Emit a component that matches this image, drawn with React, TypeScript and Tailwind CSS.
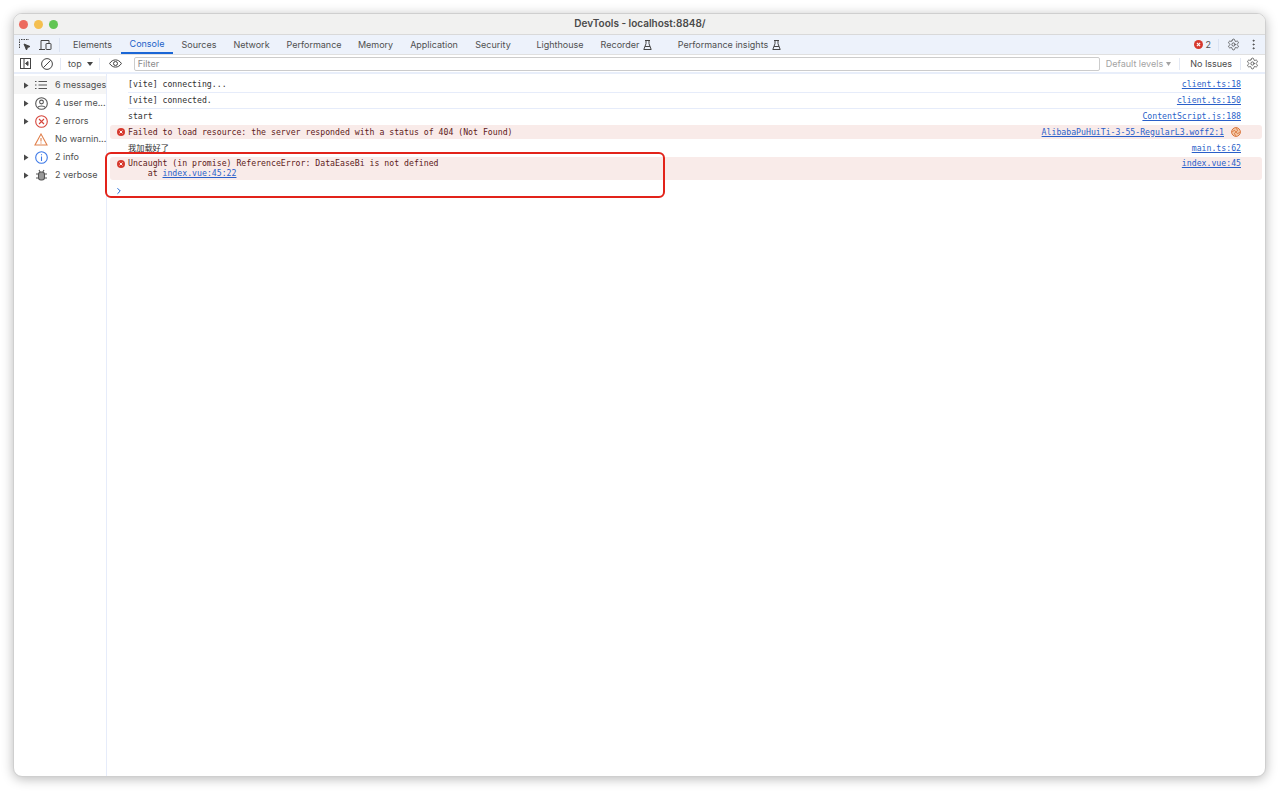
import { ChevronRight, EllipsisVertical, Settings } from "lucide-react";

const tabs = [
  { name: "Elements", w: "w-[57px]" },
  { name: "Console", w: "w-[52px]", active: true },
  { name: "Sources", w: "w-[52px]" },
  { name: "Network", w: "w-[53px]" },
  { name: "Performance", w: "w-[72px]" },
  { name: "Memory", w: "w-[51px]" },
  { name: "Application", w: "w-[66px]" },
  { name: "Security", w: "w-[52px]" },
  { name: "Lighthouse", w: "w-[82px]" },
  { name: "Recorder", w: "w-[51px]", flask: true },
  { name: "Performance insights", w: "w-[155px]", flask: true },
];

function Flask() {
  return (
    <svg width="9" height="10" viewBox="0 0 9 10" fill="none" stroke="#444" strokeWidth="1" className="shrink-0">
      <path d="M2 .5h5M3 .5v3.200L.8 9.500h7.400L6 3.700V.5M2 6.500h5" />
    </svg>
  );
}

function Caret() {
  return (
    <svg width="6" height="7" viewBox="0 0 6 7" className="shrink-0">
      <path d="M1 .5 5.500 3.500 1 6.500z" fill="#4a4a4a" />
    </svg>
  );
}

function ErrorDot({ size = 9 }: { size?: number }) {
  return (
    <svg width={size} height={size} viewBox="0 0 10 10" className="shrink-0">
      <circle cx="5" cy="5" r="5" fill="#d6392e" />
      <path d="M3.200 3.200 6.800 6.800M6.800 3.200 3.200 6.800" stroke="#fff" strokeWidth="1.200" />
    </svg>
  );
}

function SidebarIcon({ kind }: { kind: string }) {
  if (kind === "list")
    return (
      <svg width="12" height="12" viewBox="0 0 12 12" fill="none" stroke="#555" strokeWidth="1.200">
        <path d="M0 2.500h1.500M3.500 2.500H12M0 6h1.500M3.500 6H12M0 9.500h1.500M3.500 9.500H12" />
      </svg>
    );
  if (kind === "user")
    return (
      <svg width="13" height="13" viewBox="0 0 13 13" fill="none" stroke="#555" strokeWidth="1.100">
        <circle cx="6.500" cy="6.500" r="5.800" />
        <circle cx="6.500" cy="5" r="1.900" />
        <path d="M3 10.200c.6-1.600 6.400-1.600 7 0" />
      </svg>
    );
  if (kind === "error")
    return (
      <svg width="13" height="13" viewBox="0 0 13 13" fill="none" stroke="#d6453b" strokeWidth="1.100">
        <circle cx="6.500" cy="6.500" r="5.800" />
        <path d="M4 4l5 5M9 4l-5 5" />
      </svg>
    );
  if (kind === "warn")
    return (
      <svg width="14" height="13" viewBox="0 0 14 13" fill="none" stroke="#e0814d" strokeWidth="1.100">
        <path d="M7 1 13 12H1z" />
        <path d="M7 5v3.500M7 9.500v1" />
      </svg>
    );
  if (kind === "info")
    return (
      <svg width="13" height="13" viewBox="0 0 13 13" fill="none" stroke="#3b78e7" strokeWidth="1.100">
        <circle cx="6.500" cy="6.500" r="5.800" />
        <path d="M6.500 5.500V10M6.500 3.200v1.100" />
      </svg>
    );
  return (
    <svg width="11" height="12" viewBox="0 0 11 12" fill="none" stroke="#555" strokeWidth="1.100">
      <rect x="2.500" y="3" width="6" height="8" rx="2.500" fill="#999" />
      <path d="M3 1l1.200 2M8 1 6.800 3M0 5h2.500M8.500 5H11M0 9h2.500M8.500 9H11" />
    </svg>
  );
}

const sidebar = [
  { icon: "list", label: "6 messages", caret: true, active: true },
  { icon: "user", label: "4 user me...", caret: true },
  { icon: "error", label: "2 errors", caret: true },
  { icon: "warn", label: "No warnin..." },
  { icon: "info", label: "2 info", caret: true },
  { icon: "bug", label: "2 verbose", caret: true },
];

function Source({ children }: { children: string }) {
  return <span className="text-[#2a5fc9] underline whitespace-nowrap">{children}</span>;
}

function LogRow({ text, source, border, last }: { text: string; source: string; border?: boolean; last?: boolean }) {
  return (
    <div className={`flex justify-between items-center h-[16px] ml-[21px] mr-[24px] ${last ? "pb-px" : ""} ${border ? "border-b border-[#e6ecfa]" : ""}`}>
      <span>{text}</span>
      <Source>{source}</Source>
    </div>
  );
}

export default function App() {
  return (
    <div className="h-[791px] bg-white pt-[13px] pl-[13px]">
      <div className="relative flex flex-col w-[1253px] h-[764px] rounded-[9px] overflow-hidden bg-white border border-[#cfcfcf] shadow-[0_2px_12px_rgba(0,0,0,0.28)] font-['Inter',sans-serif] text-[#4f4f4f]">
        <div className="flex items-center h-[21px] bg-[#f1f1f0] border-b border-[#d9d9d9] relative shrink-0">
          <div className="flex gap-[6px] pl-[5px]">
            <span className="w-[9px] h-[9px] rounded-full bg-[#ec6a5e]" />
            <span className="w-[9px] h-[9px] rounded-full bg-[#f4bf4f]" />
            <span className="w-[9px] h-[9px] rounded-full bg-[#61c554]" />
          </div>
          <div className="flex-1 text-center text-[10px] font-semibold text-[#4a4a4a] pr-[43px] mb-[2px]">DevTools - localhost:8848/</div>
        </div>

        <div className="flex items-center h-[19px] bg-[#edf2fb] shrink-0">
          <div className="flex items-center gap-[7px] pl-[5px] pr-[7px] border-r border-[#dbe3f2] h-[14px]">
            <svg width="12" height="12" viewBox="0 0 12 12" fill="none" stroke="#444" strokeWidth="1">
              <path d="M.5 9V.5H10" strokeDasharray="1.500 1" />
              <path d="M5 5l6 2.500-2.500 1L7.500 11z" fill="#444" />
            </svg>
            <svg width="14" height="12" viewBox="0 0 14 12" fill="none" stroke="#444" strokeWidth="1">
              <path d="M1 10.500h6M3 10V1.500h8V4" />
              <rect x="8" y="4.500" width="5" height="6" rx=".5" />
            </svg>
          </div>
          <div className="flex items-center h-full pl-[4px] text-[9px]">
            {tabs.map((t) => (
              <div
                key={t.name}
                className={`flex items-center justify-center gap-[4px] h-full whitespace-nowrap ${t.w} ${t.active ? "text-[#1a5fc8] border-b-2 border-[#1a66d6]" : ""}`}
              >
                {t.name}
                {t.flask && <Flask />}
              </div>
            ))}
          </div>
          <div className="flex items-center ml-auto">
            <ErrorDot />
            <span className="text-[9px] ml-[3px] mr-[7px]">2</span>
            <span className="w-px h-[12px] bg-[#dbe3f2] mr-[8px]" />
            <Settings size={13} strokeWidth={1.400} className="text-[#444] mr-[7px]" />
            <EllipsisVertical size={13} strokeWidth={1.600} className="text-[#444] mr-[5px]" />
          </div>
        </div>

        <div className="flex items-center h-[20px] bg-white border-t border-[#e0e0e0] border-b-2 border-b-[#e8eefa] shrink-0">
          <svg width="12" height="11" viewBox="0 0 12 11" fill="none" stroke="#444" strokeWidth="1" className="ml-[6px]">
            <rect x=".5" y=".5" width="10" height="10" />
            <path d="M4 .5v10" />
            <path d="M8 3.500v4L5.500 5.500z" fill="#444" />
          </svg>
          <svg width="12" height="12" viewBox="0 0 12 12" fill="none" stroke="#444" strokeWidth="1" className="ml-[9px]">
            <circle cx="6" cy="6" r="5.400" />
            <path d="M2.300 9.700 9.700 2.300" />
          </svg>
          <span className="w-px h-[12px] bg-[#e4e9f4] ml-[7px]" />
          <span className="text-[9px] ml-[7px]">top</span>
          <svg width="6" height="4" viewBox="0 0 6 4" className="ml-[5px]">
            <path d="M0 0h6L3 4z" fill="#444" />
          </svg>
          <span className="w-px h-[12px] bg-[#e4e9f4] ml-[6px]" />
          <svg width="13" height="9" viewBox="0 0 13 9" fill="none" stroke="#444" strokeWidth="1" className="ml-[9px]">
            <path d="M.6 4.500C3.500-.3 9.500-.3 12.400 4.500 9.500 9.300 3.500 9.300.6 4.500z" />
            <circle cx="6.500" cy="4.500" r="2" />
          </svg>
          <div className="flex items-center w-[966px] h-[14px] ml-[12px] pl-[3px] rounded-[2px] border border-[#ccc] text-[9px] text-[#8a8a8a]">Filter</div>
          <span className="text-[9px] text-[#a3a3a3] ml-[6px]">Default levels</span>
          <svg width="5" height="4" viewBox="0 0 5 4" className="ml-[3px]">
            <path d="M0 0h5L2.500 4z" fill="#a3a3a3" />
          </svg>
          <span className="w-px h-[12px] bg-[#e4e9f4] ml-[8px]" />
          <span className="text-[9px] text-[#4a4a4a] ml-[10px]">No Issues</span>
          <span className="w-px h-[12px] bg-[#e4e9f4] ml-[8px]" />
          <Settings size={13} strokeWidth={1.400} className="text-[#444] ml-[5px]" />
        </div>

        <div className="flex flex-1 min-h-0">
          <div className="w-[93px] pt-[2px] border-r border-[#e6ecfa] shrink-0 text-[9px]">
            {sidebar.map((s) => (
              <div key={s.label} className={`flex items-center h-[18px] whitespace-nowrap ${s.active ? "bg-[#f5f5f5]" : ""}`}>
                <span className="w-[10px] ml-[9px] shrink-0">{s.caret && <Caret />}</span>
                <span className="w-[14px] ml-[1px] flex justify-center shrink-0">
                  <SidebarIcon kind={s.icon} />
                </span>
                <span className="ml-[7px]">{s.label}</span>
              </div>
            ))}
          </div>

          <div className="relative flex-1 pt-[3px] font-['DejaVu_Sans_Mono','Noto_Sans_CJK_SC',monospace] text-[8.200px] text-[#303030]">
            <LogRow text="[vite] connecting..." source="client.ts:18" border />
            <LogRow text="[vite] connected." source="client.ts:150" border />
            <LogRow text="start" source="ContentScript.js:188" last />
            <div className="flex items-center h-[14px] mx-[3px] rounded-[3px] bg-[#f9ebe9] text-[#5e1a1a]">
              <span className="flex justify-center w-[15px] ml-[3px]">
                <ErrorDot size={8} />
              </span>
              <span>Failed to load resource: the server responded with a status of 404 (Not Found)</span>
              <span className="ml-auto flex items-center">
                <Source>AlibabaPuHuiTi-3-55-RegularL3.woff2:1</Source>
                <svg width="10" height="10" viewBox="0 0 10 10" fill="none" stroke="#d9743a" strokeWidth="1" className="ml-[7px] mr-[21px]">
                  <circle cx="5" cy="5" r="4.400" fill="#f3c7a6" />
                  <path d="M5 1.500C7 2.500 7 4 5 5S3 7.500 5 8.500M1.500 5C2.500 3 4 3 5 5s2.500 2 3.500 0" />
                </svg>
              </span>
            </div>
            <div className="flex justify-between items-center h-[18px] ml-[21px] mr-[24px]">
              <span>我加载好了</span>
              <Source>main.ts:62</Source>
            </div>
            <div className="flex h-[23px] mx-[3px] rounded-[3px] bg-[#f9ebe9] text-[#5e1a1a] pt-[2px] leading-[9.500px]">
              <span className="flex justify-center w-[15px] ml-[3px] pt-[1px]">
                <ErrorDot size={8} />
              </span>
              <div className="whitespace-pre">
                <div>Uncaught (in promise) ReferenceError: DataEaseBi is not defined</div>
                <div>
                  {"    at "}
                  <Source>index.vue:45:22</Source>
                </div>
              </div>
              <span className="ml-auto mr-[21px]">
                <Source>index.vue:45</Source>
              </span>
            </div>
            <div className="flex items-center h-[21px] ml-[7px]">
              <ChevronRight size={10} strokeWidth={2.400} className="text-[#1a66d6]" />
            </div>
            <div className="absolute left-[-2px] top-[78px] w-[560px] h-[46px] rounded-[6px] border-2 border-[#e2231a]" />
          </div>
        </div>
      </div>
    </div>
  );
}
